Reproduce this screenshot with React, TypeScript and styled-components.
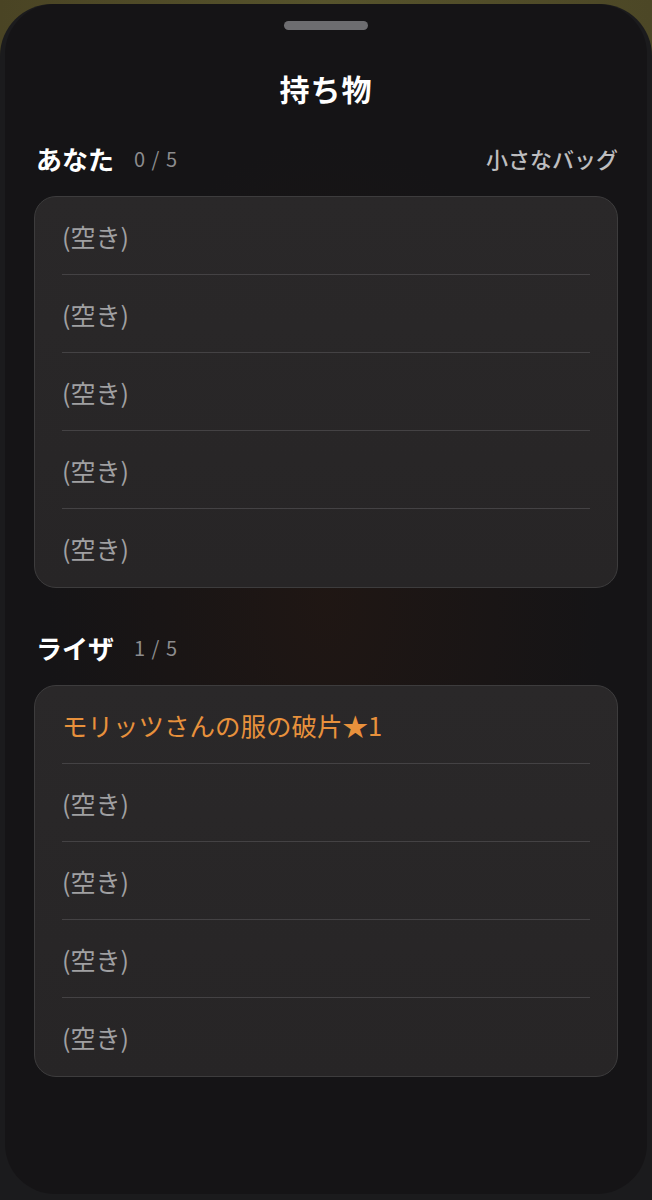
import React from 'react';
import styled, { createGlobalStyle } from 'styled-components';

const GlobalStyle = createGlobalStyle`
  html, body {
    margin: 0;
    padding: 0;
    background: #4b4626;
  }
  body {
    font-family: 'Noto Sans CJK JP', 'Noto Sans', sans-serif;
  }
`;

const Page = styled.div`
  width: 652px;
  height: 1200px;
  padding-top: 4px;
  box-sizing: border-box;
  background: linear-gradient(90deg, #4a4424 0%, #56532c 50%, #4c4726 100%);
  overflow: hidden;
`;

const Sheet = styled.div`
  height: 1200px;
  background: #1b1b1d;
  border-radius: 52px 52px 0 0;
  overflow: hidden;
`;

const Panel = styled.div`
  height: 1190px;
  margin: 0 5px;
  border-radius: 50px;
  background:
    radial-gradient(ellipse 280px 460px at 50% 50%, rgba(55, 28, 14, 0.3), rgba(0, 0, 0, 0) 100%),
    #151416;
  padding: 17px 29px 0;
  box-sizing: border-box;
  display: flex;
  flex-direction: column;
`;

const Handle = styled.div`
  align-self: center;
  width: 84px;
  height: 9px;
  border-radius: 5px;
  background: #6d6d70;
`;

const Title = styled.h1`
  margin: 38px 0 0;
  font-size: 30px;
  line-height: 40px;
  font-weight: 700;
  color: #ffffff;
  text-align: center;
  letter-spacing: 1px;
`;

const Header = styled.div<{ $gap: number }>`
  margin-top: ${(p) => p.$gap}px;
  height: 32px;
  display: flex;
  align-items: center;
  padding-left: 2px;
`;

const Name = styled.span`
  font-size: 26px;
  font-weight: 700;
  color: #ffffff;
`;

const Count = styled.span`
  margin-left: 20px;
  font-size: 20px;
  color: #8c8c8e;
  letter-spacing: 1px;
`;

const Bag = styled.span`
  margin-left: auto;
  font-size: 22px;
  font-weight: 500;
  color: #bdbdbf;
`;

const Card = styled.div`
  margin-top: 22px;
  background: linear-gradient(180deg, #2a2829 0%, #272526 100%);
  border: 1px solid #3d3c3d;
  border-radius: 22px;
  padding: 0 27px;
`;

const Row = styled.div`
  height: 78px;
  display: flex;
  align-items: center;
  border-bottom: 1px solid #444244;
  box-sizing: border-box;
  &:last-child {
    border-bottom: none;
  }
`;

const Slot = styled.span<{ $filled?: boolean }>`
  font-size: ${(p) => (p.$filled ? 25.5 : 25)}px;
  color: ${(p) => (p.$filled ? '#e8913c' : '#a0a0a2')};
  font-weight: 400;
`;

type Party = {
  name: string;
  items: string[];
  bag?: string;
};

const parties: Party[] = [
  { name: 'あなた', items: [], bag: '小さなバッグ' },
  { name: 'ライザ', items: ['モリッツさんの服の破片★1'] },
];

const CAPACITY = 5;

const App = (): JSX.Element => {
  return (
    <Page>
      <GlobalStyle />
      <Sheet>
        <Panel>
          <Handle />
          <Title>持ち物</Title>
          {parties.map((party, i) => (
            <React.Fragment key={party.name}>
              <Header $gap={i === 0 ? 34 : 43}>
                <Name>{party.name}</Name>
                <Count>{party.items.length} / {CAPACITY}</Count>
                {party.bag && <Bag>{party.bag}</Bag>}
              </Header>
              <Card>
                {Array.from({ length: CAPACITY }).map((_, j) => {
                  const item = party.items[j];
                  return (
                    <Row key={j}>
                      <Slot $filled={!!item}>{item ?? '(空き)'}</Slot>
                    </Row>
                  );
                })}
              </Card>
            </React.Fragment>
          ))}
        </Panel>
      </Sheet>
    </Page>
  );
};

export default App;
